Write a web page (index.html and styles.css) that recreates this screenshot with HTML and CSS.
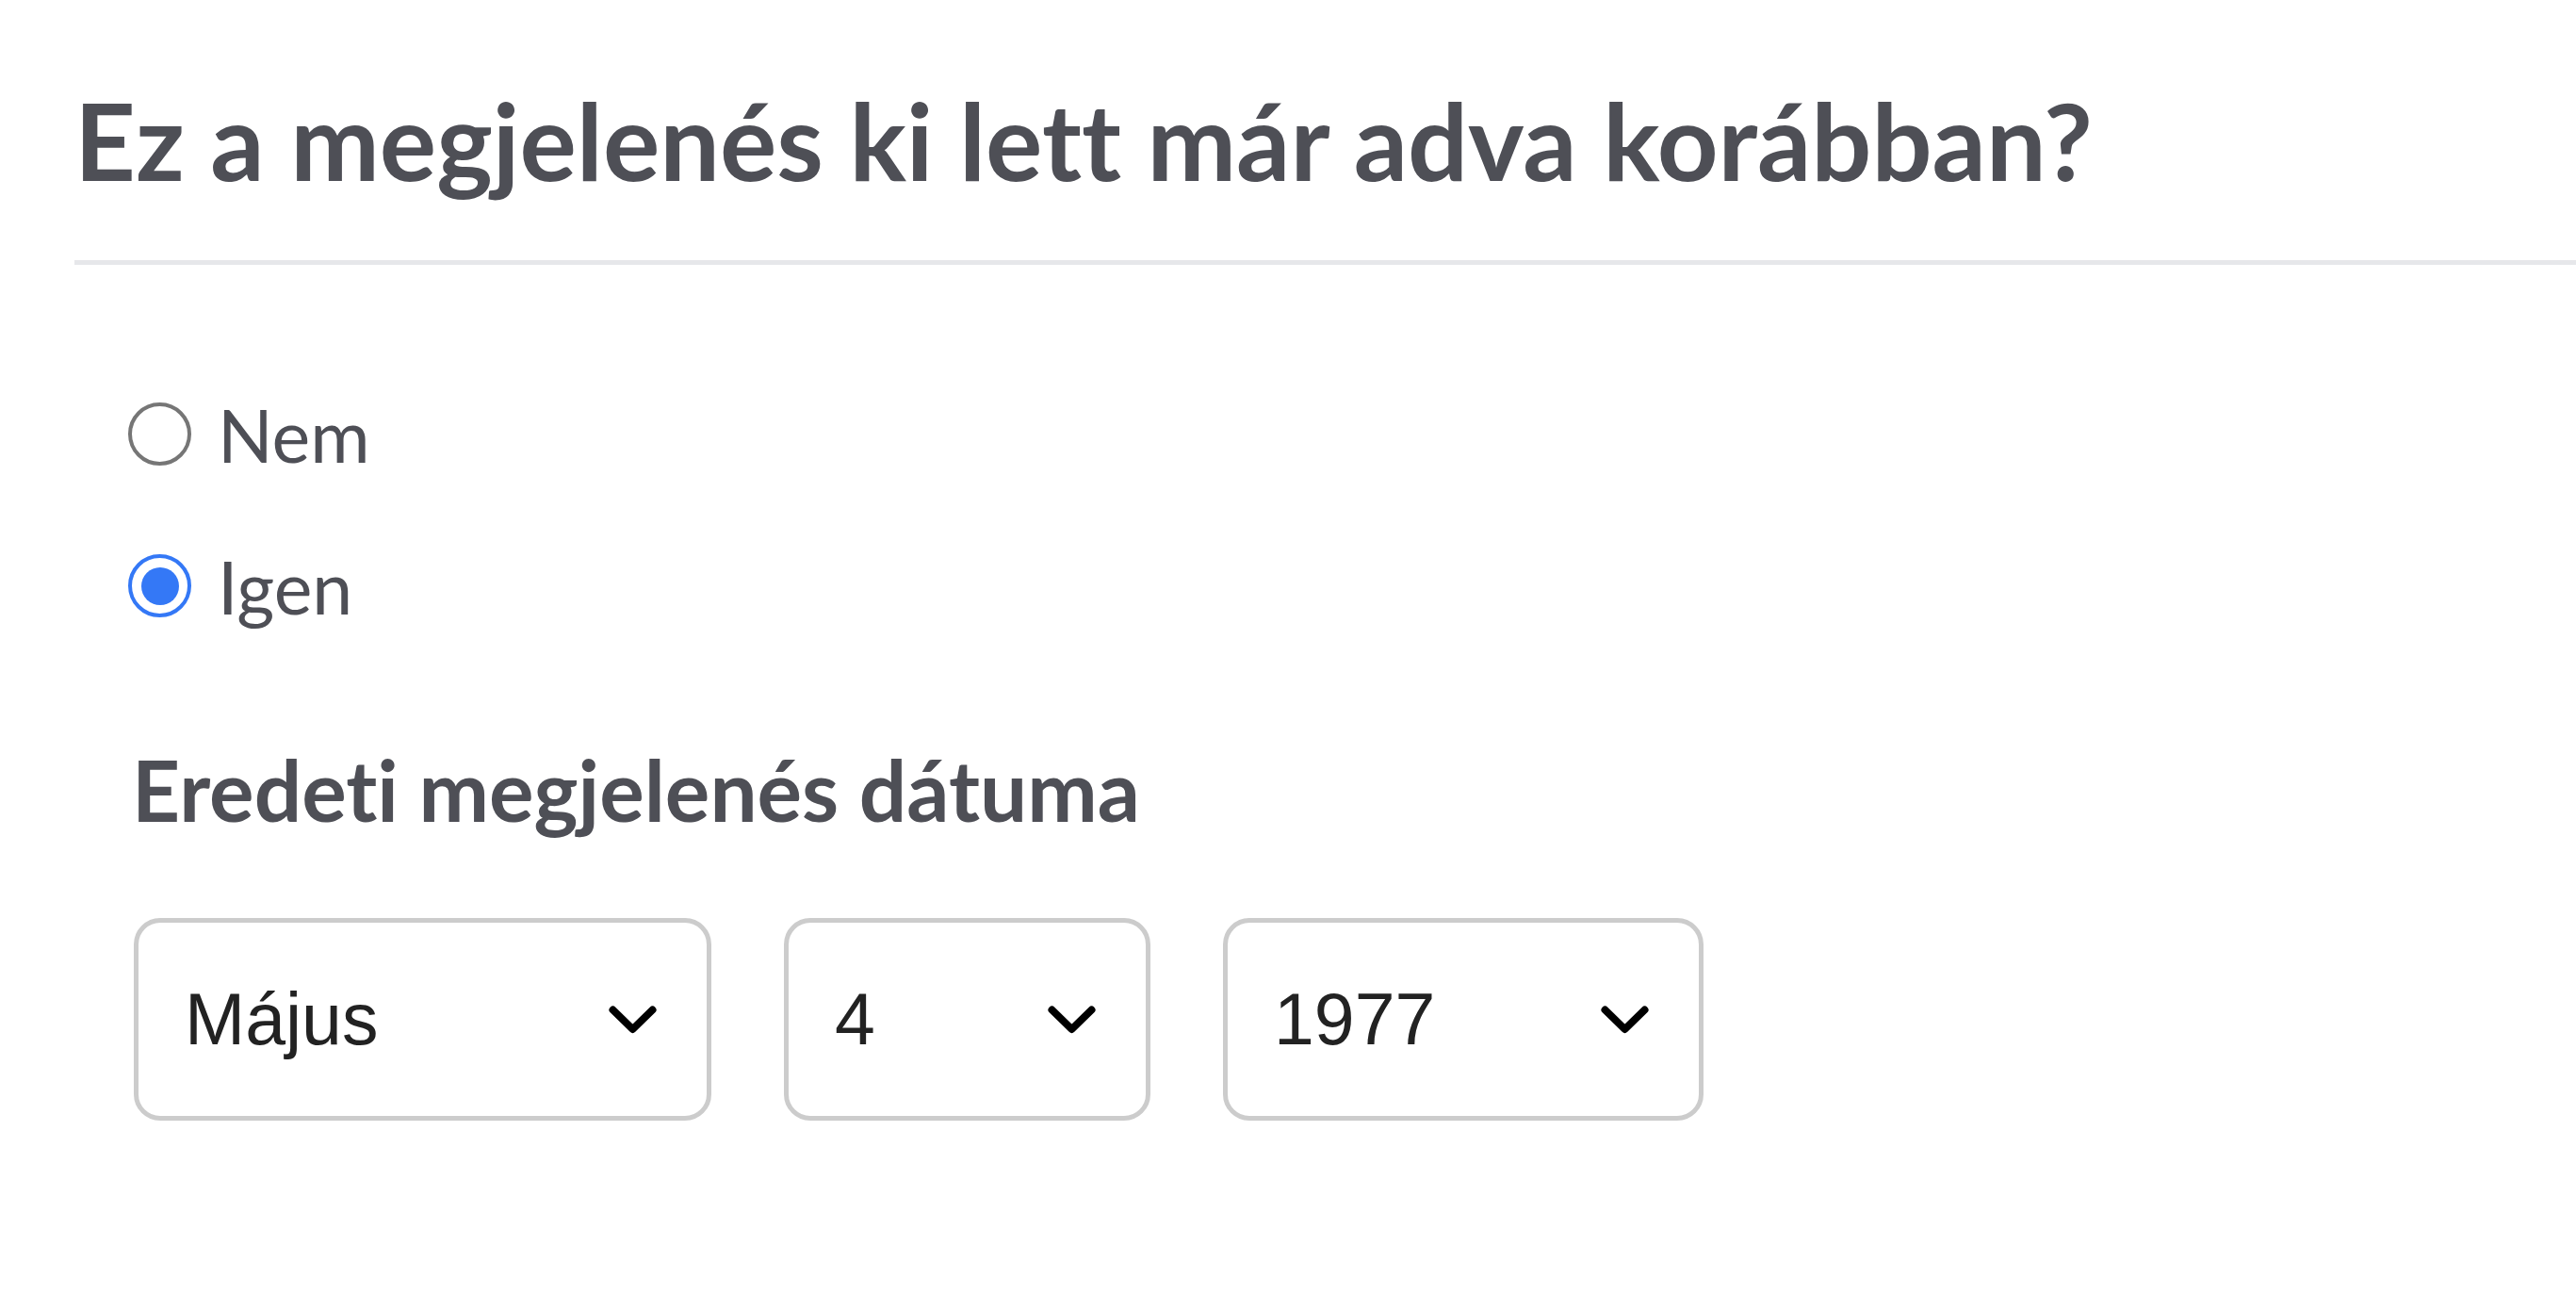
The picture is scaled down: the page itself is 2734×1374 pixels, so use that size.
FILE: index.html
```html
<!DOCTYPE html>
<html lang="hu">
<head>
<meta charset="utf-8">
<title>Megjelenés</title>
<link rel="stylesheet" href="styles.css">
</head>
<body>
<main class="page">
  <h1 class="title">Ez a megjelenés ki lett már adva korábban?</h1>
  <hr class="divider">
  <section class="content">
    <div class="radios">
      <label class="radio">
        <span class="radio-circle"></span>
        <span class="radio-label">Nem</span>
      </label>
      <label class="radio">
        <span class="radio-circle radio-circle--checked"><span class="radio-dot"></span></span>
        <span class="radio-label">Igen</span>
      </label>
    </div>
    <h2 class="subtitle">Eredeti megjelenés dátuma</h2>
    <div class="selects">
      <div class="select select--month">
        <span class="select-value">Május</span>
        <svg class="chevron" width="51" height="30" viewBox="0 0 51 30"><path d="M4.5 4.5 L25.5 25 L46.5 4.5" fill="none" stroke="#000" stroke-width="8" stroke-linecap="round" stroke-linejoin="round"/></svg>
      </div>
      <div class="select select--day">
        <span class="select-value">4</span>
        <svg class="chevron" width="51" height="30" viewBox="0 0 51 30"><path d="M4.5 4.5 L25.5 25 L46.5 4.5" fill="none" stroke="#000" stroke-width="8" stroke-linecap="round" stroke-linejoin="round"/></svg>
      </div>
      <div class="select select--year">
        <span class="select-value">1977</span>
        <svg class="chevron" width="51" height="30" viewBox="0 0 51 30"><path d="M4.5 4.5 L25.5 25 L46.5 4.5" fill="none" stroke="#000" stroke-width="8" stroke-linecap="round" stroke-linejoin="round"/></svg>
      </div>
    </div>
  </section>
</main>
</body>
</html>
```

FILE: styles.css
```css
* { box-sizing: border-box; }

html, body {
  margin: 0;
  padding: 0;
  background: #ffffff;
}

body {
  font-family: Lato, "Noto Sans", sans-serif;
  color: #4e4f56;
  font-variant-ligatures: none;
  font-feature-settings: "liga" 0, "clig" 0;
}

.page {
  padding: 80px 0 0 79px;
}

.title {
  margin: 0;
  font-family: Lato, sans-serif;
  font-weight: 700;
  font-size: 113px;
  line-height: 137px;
  color: #4e4f56;
}

.divider {
  margin: 59px 0 0 0;
  border: 0;
  height: 5px;
  background: #e6e7ea;
}

.content {
  padding-left: 57px;
}

.radios {
  display: flex;
  flex-direction: column;
  gap: 94px;
  margin-top: 146px;
}

.radio {
  display: flex;
  align-items: center;
  gap: 28px;
  height: 67px;
}

.radio-circle {
  width: 67px;
  height: 67px;
  border-radius: 50%;
  border: 4.5px solid #767676;
  display: flex;
  align-items: center;
  justify-content: center;
  flex: none;
}

.radio-circle--checked {
  border-color: #3478f6;
}

.radio-dot {
  width: 40px;
  height: 40px;
  border-radius: 50%;
  background: #3478f6;
}

.radio-label {
  font-family: Lato, sans-serif;
  font-weight: 400;
  font-size: 77px;
  line-height: 92px;
  color: #4e4f56;
}

.subtitle {
  margin: 129px 0 0 4px;
  font-family: Lato, sans-serif;
  font-weight: 700;
  font-size: 89px;
  line-height: 107px;
  color: #4e4f56;
}

.selects {
  display: flex;
  gap: 77px;
  margin: 83px 0 0 6px;
}

.select {
  height: 215px;
  border: 5px solid #cccccc;
  border-radius: 28px;
  display: flex;
  align-items: center;
  justify-content: space-between;
  padding: 0 53px 0 49px;
  background: #fff;
}

.select--month { width: 613px; }
.select--day { width: 389px; }
.select--year { width: 510px; }

.select-value {
  font-family: "Liberation Sans", Arial, sans-serif;
  font-size: 77px;
  color: #222222;
  line-height: 1;
}

.chevron {
  flex: none;
  display: block;
}
```
